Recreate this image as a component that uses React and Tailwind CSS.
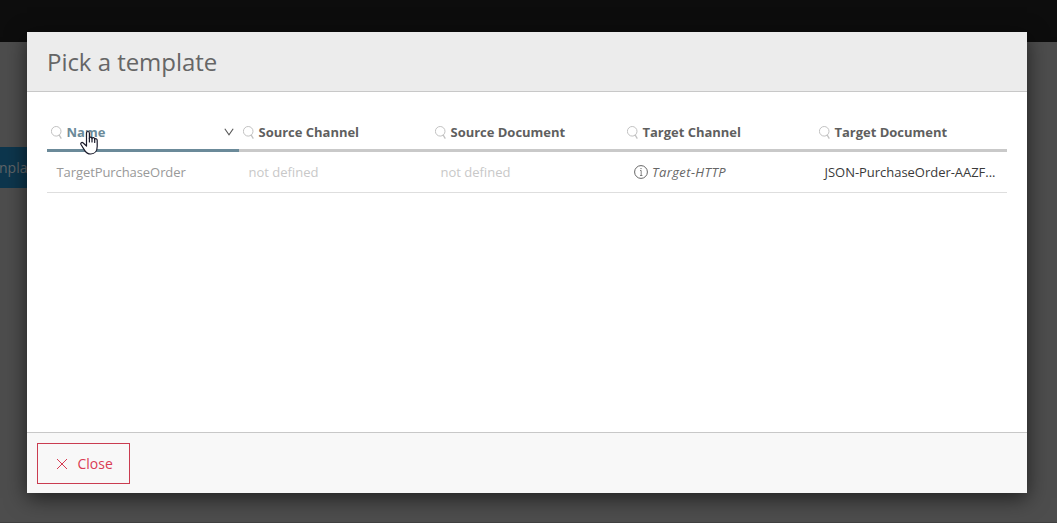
import React from "react";

const columns = ["Name", "Source Channel", "Source Document", "Target Channel", "Target Document"];

function SearchIcon() {
  return (
    <svg className="block h-[13px] w-3 shrink-0" viewBox="0 0 12 13" fill="none" stroke="#c2c2c2" strokeWidth="1">
      <circle cx="5.2" cy="5.3" r="4.8" />
      <path d="M7.9 8.6L10.3 12.6" strokeWidth="1.3" />
    </svg>
  );
}

function InfoIcon() {
  return (
    <svg className="block h-[14px] w-[14px] shrink-0" viewBox="0 0 14 14" fill="none" stroke="#666" strokeWidth="1">
      <circle cx="7" cy="7" r="6.4" />
      <path d="M6 5.5H7.2V10.6M6 10.5H8.4" strokeWidth=".8" />
      <path d="M7 3V4.1" />
    </svg>
  );
}

function HandCursor() {
  return (
    <svg className="absolute left-[80px] top-[130px] h-[25px] w-[18px]" viewBox="0 0 18 25" fill="#fff" stroke="#1b1b2b" strokeWidth="1.2" strokeLinejoin="round" strokeLinecap="round">
      <path d="M6.5 15.6V3.2C6.5 .9 9.4 .9 9.4 3.2V8.5C9.4 6.6 12 6.8 12 8.7C12.2 7.1 14.7 7.4 14.7 9.3C15.2 8.2 17.2 8.6 17.2 10.5V16.5C17.2 20.5 15 24 10.8 24C7.8 24 6.1 22.8 4.8 20.6L1 14.5C.2 13 1.9 11.8 3.2 13L6.5 16Z" />
      <path d="M9.4 8V12M12 8.7V12M14.7 9.3V12.4" fill="none" />
    </svg>
  );
}

export default function App() {
  return (
    <div className="relative flex h-[523px] w-[1057px] flex-col overflow-hidden bg-[#4d4d4d] font-['Open_Sans',sans-serif]">
      <div className="h-[42px] shrink-0 bg-[#0d0d0d]" />
      <div className="flex flex-1 flex-col items-start justify-between pt-[105px]">
        <div className="flex h-[41px] w-[60px] items-center bg-[#0d364d] text-sm text-[#606568]">
          <span className="-ml-px">nplate</span>
        </div>
        <div className="h-px w-full bg-[#404040]" />
      </div>
      <div className="absolute left-[27px] top-[32px] flex h-[461px] w-[1000px] flex-col bg-white shadow-[0_5px_20px_rgba(0,0,0,0.6)]">
        <header className="flex h-[60px] shrink-0 items-center border-b border-[#c8c8c8] bg-[#ececec] px-5">
          <h1 className="text-2xl tracking-[-0.04px] text-[#666]">Pick a template</h1>
        </header>
        <main className="flex-1 px-5 pt-[23px] text-[13px]">
          <div className="grid grid-cols-5">
            {columns.map((name, i) => (
              <div
                key={name}
                className={
                  "flex h-[37px] items-center gap-[3.5px] border-b-3 pl-1 font-bold " +
                  (i === 0 ? "border-[#6b8a99] text-[#6b8a99]" : "border-[#c9c9c9] text-[#5f5f5f]")
                }
              >
                <SearchIcon />
                <span className="pt-0.5 tracking-[-0.02px]">{name}</span>
                {i === 0 && (
                  <svg className="ml-auto mr-[5px] h-2 w-[10px]" viewBox="0 0 10 8" fill="none" stroke="#555" strokeWidth="1.1">
                    <path d="M.8 .8L5 6.9L9.2 .8" />
                  </svg>
                )}
              </div>
            ))}
          </div>
          <div className="grid h-[41px] grid-cols-5 items-center border-b border-[#dedede]">
            <span className="pl-[9.5px] pt-0.5 tracking-[-0.08px] text-[#999]">TargetPurchaseOrder</span>
            <span className="pl-[9.5px] pt-0.5 text-[#c8c8c8]">not defined</span>
            <span className="pl-[9.5px] pt-0.5 text-[#c8c8c8]">not defined</span>
            <span className="flex items-center gap-1 pl-[11px] italic text-[#666]">
              <InfoIcon />
              <span className="pt-0.5 tracking-[0.4px]">Target-HTTP</span>
            </span>
            <span className="whitespace-nowrap pl-[9.5px] pt-0.5 tracking-[-0.03px] text-[#3a3a3a]">JSON-PurchaseOrder-AAZF...</span>
          </div>
        </main>
        <footer className="flex h-[61px] shrink-0 items-center border-t border-[#c8c8c8] bg-[#f8f8f8] px-[10px]">
          <button className="flex h-[41px] w-[93px] items-center gap-[9.5px] border border-[#ca3c50] pl-[18px] text-sm text-[#da3c54]">
            <svg className="mt-px h-3 w-3" viewBox="0 0 12 12" fill="none" stroke="#d63b52" strokeWidth="1">
              <path d="M1 1L11 11M11 1L1 11" />
            </svg>
            <span className="pt-0.5">Close</span>
          </button>
        </footer>
      </div>
      <HandCursor />
    </div>
  );
}
